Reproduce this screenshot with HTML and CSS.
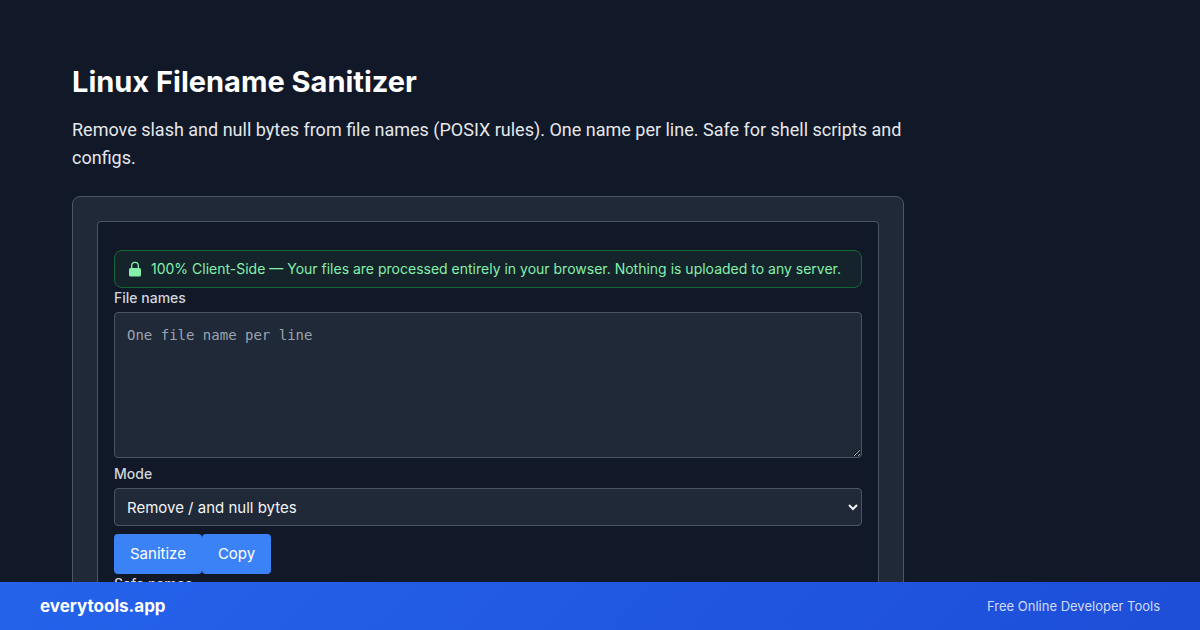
FILE: index.html
```html
<!DOCTYPE html>
<html lang="en">
<head>
  <meta charset="UTF-8">
  <meta name="viewport" content="width=device-width, initial-scale=1">
  <title>Linux Filename Sanitizer</title>
  <link rel="stylesheet" href="styles.css">
</head>
<body>

  <main class="page">
    <h1 class="title">Linux Filename Sanitizer</h1>
    <p class="intro">Remove slash and null bytes from file names (POSIX rules). One name per line. Safe for shell scripts and configs.</p>

    <section class="card">
      <form class="tool">
        <div class="notice">
          <svg class="lock" viewBox="0 0 16 16" aria-hidden="true">
            <path d="M4.7 8V4.6a3.3 3.3 0 0 1 6.6 0V8" fill="none" stroke="currentColor" stroke-width="1.3"/>
            <rect x="2" y="7" width="12" height="8.5" rx="1.6" fill="currentColor"/>
          </svg>
          <span>100% Client-Side — Your files are processed entirely in your browser. Nothing is uploaded to any server.</span>
        </div>

        <div class="field">
          <label for="names">File names</label>
          <textarea id="names" class="area" rows="6" placeholder="One file name per line"></textarea>
        </div>

        <div class="field">
          <label for="mode">Mode</label>
          <select id="mode" class="select">
            <option>Remove / and null bytes</option>
          </select>
        </div>

        <div class="actions">
          <button type="button" class="btn">Sanitize</button>
          <button type="button" class="btn">Copy</button>
        </div>

        <div class="field">
          <label for="safe">Safe names</label>
          <textarea id="safe" class="area" rows="6" readonly></textarea>
        </div>
      </form>
    </section>
  </main>

  <footer class="footer">
    <a href="#" class="brand">everytools.app</a>
    <span class="tagline">Free Online Developer Tools</span>
  </footer>

</body>
</html>
```
FILE: styles.css
```css
:root {
  --bg: #111827;
  --panel: #1f2937;
  --line: #4b5563;
  --blue: #3b82f6;
  --text: #f3f4f6;
  --green: #86efac;
}
* { box-sizing: border-box; margin: 0; padding: 0; }
body {
  height: 100vh;
  overflow: hidden;
  padding: 0 40px;
  background: var(--bg);
  color: var(--text);
  font: 15px/24px Inter, sans-serif;
}

.page {
  max-width: 896px;
  padding: 64px 32px;
}
.title {
  margin-bottom: 16px;
  color: #fff;
  font-size: 29px;
  line-height: 36px;
  font-weight: 700;
}
.intro {
  margin-bottom: 24px;
  color: #e5e7eb;
  font: 18px/28px Roboto, sans-serif;
}

.card {
  padding: 24px;
  background: var(--panel);
  border: 1px solid var(--line);
  border-radius: 8px;
}
.tool {
  padding: 28px 16px 16px;
  background: var(--bg);
  border: 1px solid var(--line);
  border-radius: 4px;
}
.notice {
  display: flex;
  align-items: center;
  gap: 8px;
  padding: 8px 12px;
  background: #14242a;
  border: 1px solid #166534;
  border-radius: 8px;
  color: var(--green);
  font-size: 14px;
  line-height: 20px;
}
.lock {
  width: 16px;
  height: 16px;
  flex-shrink: 0;
}

.field label {
  display: block;
  margin-bottom: 4px;
  color: #d1d5db;
  font-size: 14px;
  line-height: 20px;
  font-weight: 500;
}
.area,
.select {
  display: block;
  width: 100%;
  background: var(--panel);
  border: 1px solid var(--line);
  border-radius: 4px;
  color: var(--text);
}
.area {
  margin-bottom: 6px;
  padding: 12px;
  font: 14px/20px "DejaVu Sans Mono", monospace;
  resize: vertical;
}
.area::placeholder { color: #9ca3af; }
.select {
  height: 38px;
  padding: 0 8px;
  font: inherit;
}

.actions {
  display: flex;
  padding-top: 8px;
}
.btn {
  padding: 8px 16px;
  background: var(--blue);
  border: 0;
  border-radius: 4px;
  color: #fff;
  font: inherit;
  cursor: pointer;
}
.btn:hover { background: #2563eb; }

.footer {
  position: fixed;
  left: 0;
  right: 0;
  bottom: 0;
  display: flex;
  align-items: center;
  justify-content: space-between;
  height: 48px;
  padding: 0 40px;
  background: linear-gradient(135deg, #2563eb, #1d4ed8);
}
.brand {
  color: #fff;
  font-size: 17px;
  font-weight: 700;
  text-decoration: none;
}
.tagline {
  color: rgba(255, 255, 255, .8);
  font-size: 13px;
}
```
